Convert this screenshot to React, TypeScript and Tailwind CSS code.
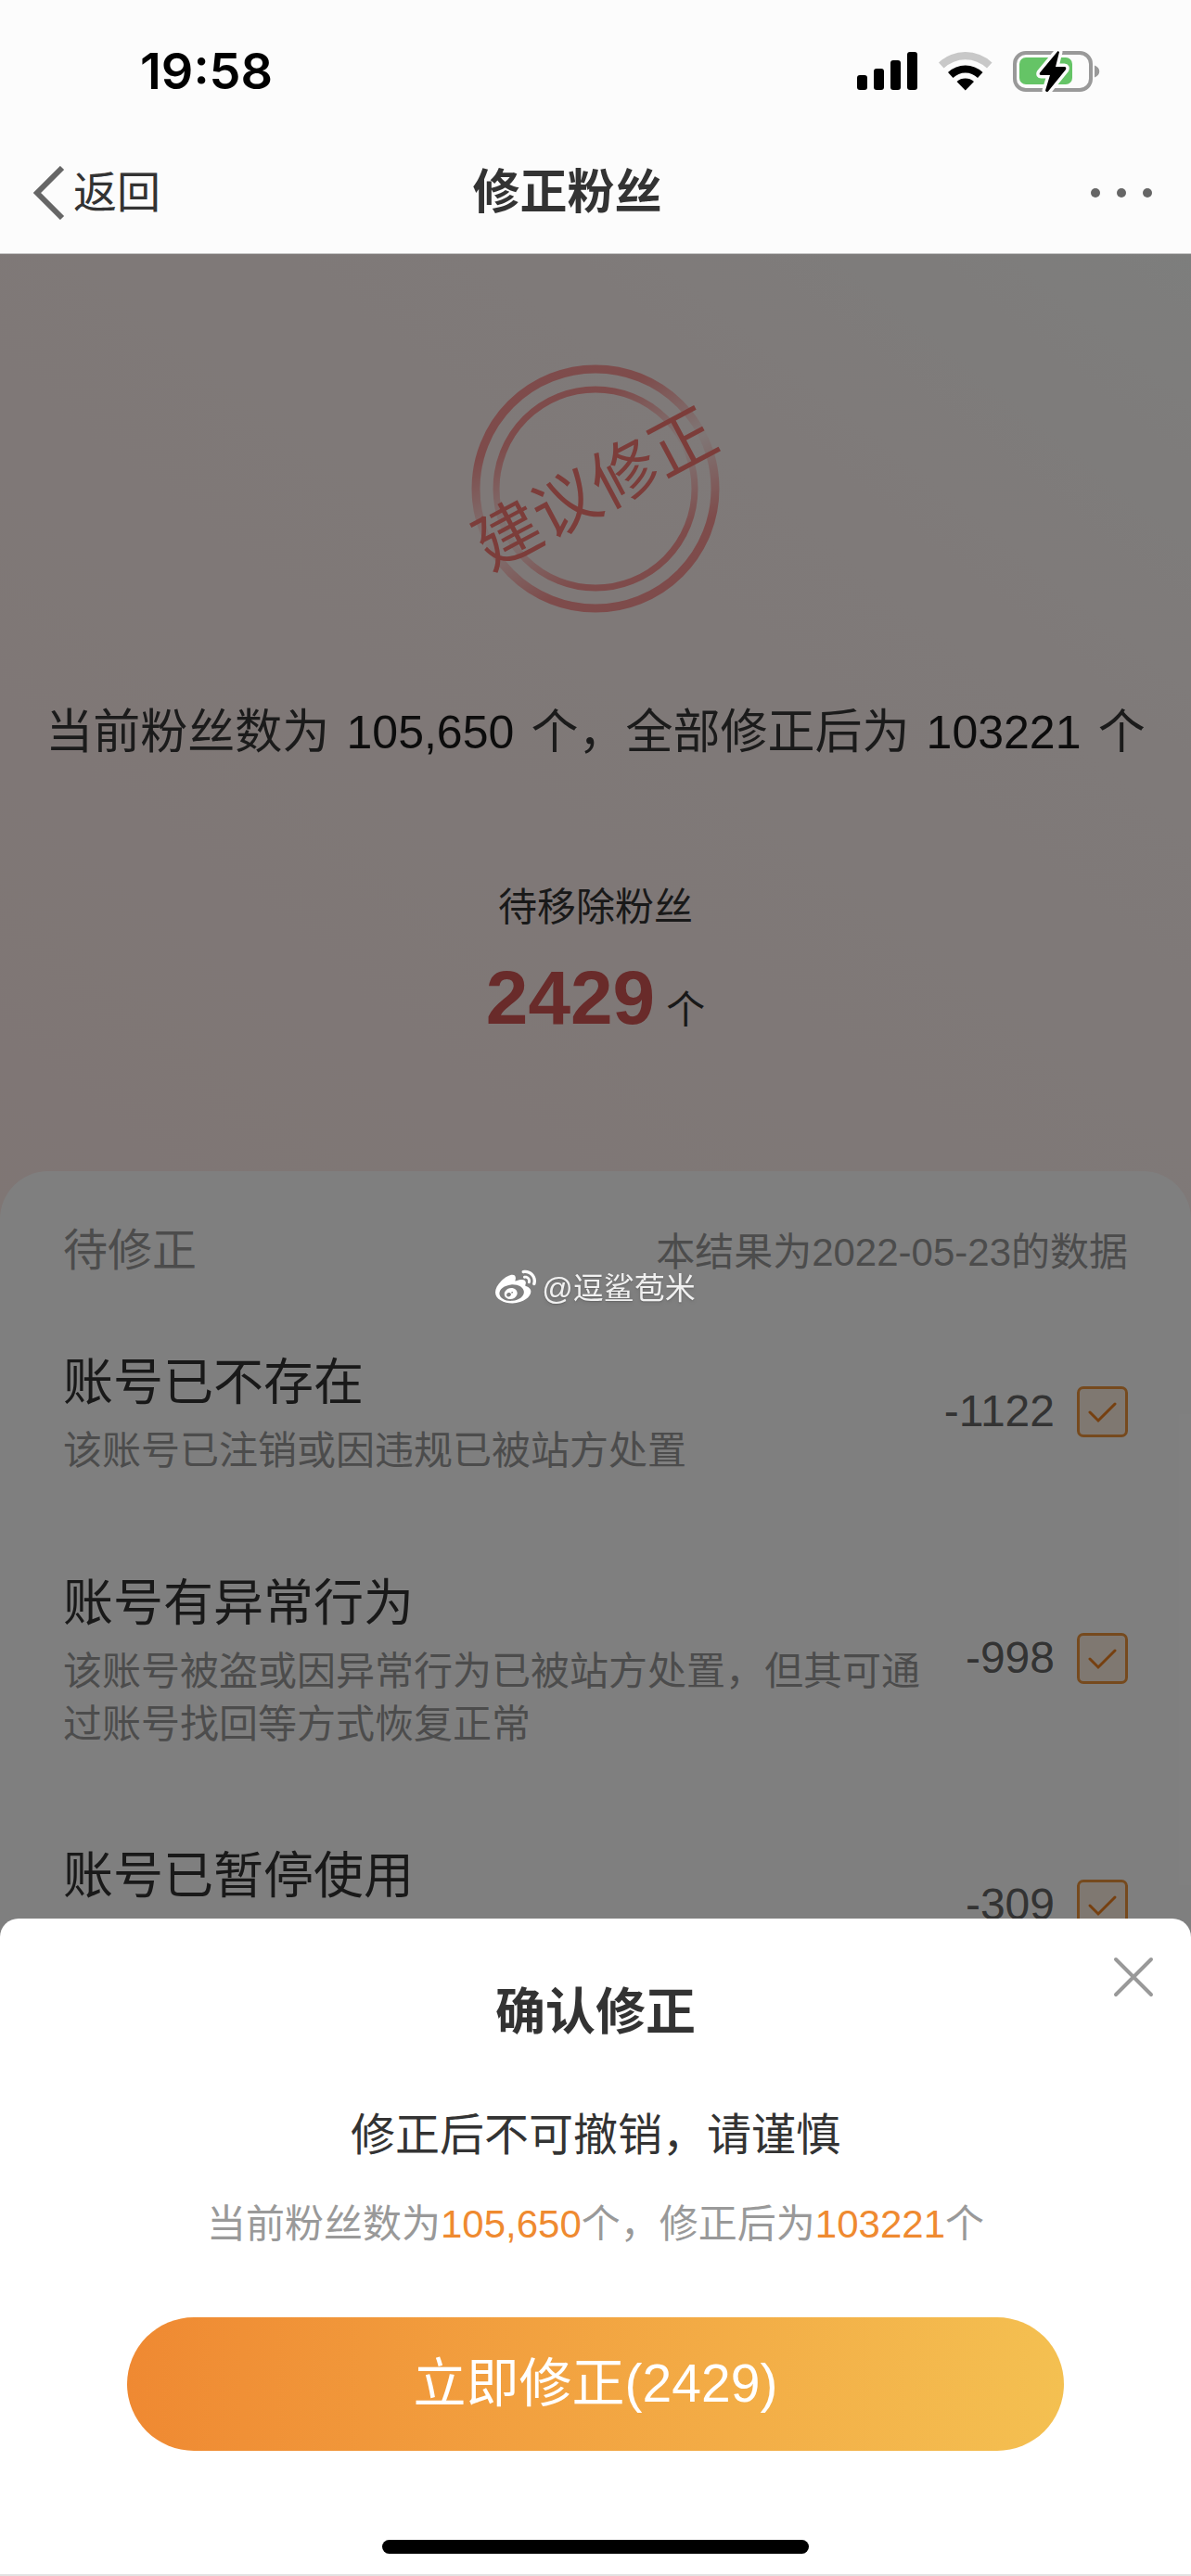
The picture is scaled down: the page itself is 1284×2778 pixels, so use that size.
import React, { useState } from 'react';
import { FaWeibo } from 'react-icons/fa';

const items = [
  { id: 'missing', title: '账号已不存在', desc: '该账号已注销或因违规已被站方处置', value: '-1122' },
  { id: 'abnormal', title: '账号有异常行为', desc: '该账号被盗或因异常行为已被站方处置，但其可通过账号找回等方式恢复正常', value: '-998' },
  { id: 'paused', title: '账号已暂停使用', desc: '', value: '-309' },
];

function StatusIcons() {
  return (
    <div className="flex items-center">
      <svg width="66" height="44" viewBox="0 0 66 44" aria-hidden="true">
        <rect x="0" y="26" width="11" height="16" rx="3" />
        <rect x="18" y="19" width="11" height="23" rx="3" />
        <rect x="36" y="10" width="11" height="32" rx="3" />
        <rect x="54" y="1" width="11" height="41" rx="3" />
      </svg>
      <svg className="ml-[22px]" width="58" height="44" viewBox="0 0 58 44" aria-hidden="true">
        <path d="M0 12.5A42 42 0 0 1 57.500 12.500L52 18.500A34 34 0 0 0 5.500 18.500Z" fill="#c8c8c8" />
        <path d="M10 23A27.500 27.500 0 0 1 47.500 23L42 29A19 19 0 0 0 15.500 29Z" />
        <path d="M19.500 33A14 14 0 0 1 38 33L28.750 42.500Z" />
      </svg>
      <svg className="ml-[22px]" width="96" height="48" viewBox="0 0 96 48" aria-hidden="true">
        <rect x="2" y="4" width="82" height="40" rx="12" fill="none" stroke="#999" strokeWidth="4" />
        <rect x="7" y="9" width="57" height="29" rx="7" fill="#65c466" />
        <path d="M88 17.500C95 20 95 28 88 30.500Z" fill="#999" />
        <path
          d="M48.500 2L29 25.500Q28 28 30.500 28H40L35 44.500Q36 47 38 45.500L57 22Q58 19 55.500 19H46L50 3Z"
          stroke="#fcfcfc"
          strokeWidth="7"
          strokeLinejoin="round"
          paintOrder="stroke"
        />
      </svg>
    </div>
  );
}

function Stamp() {
  return (
    <div className="relative flex size-[268px] items-center justify-center">
      <svg className="absolute inset-0" viewBox="0 0 268 268" fill="none" aria-hidden="true">
        <defs>
          {/* both rings fade out along the line of the text */}
          <linearGradient id="upper" gradientUnits="userSpaceOnUse" x1="96" y1="58" x2="134" y2="134">
            <stop offset="0" stopColor="#fff" stopOpacity="0.52" />
            <stop offset="1" stopColor="#fff" stopOpacity="0.03" />
          </linearGradient>
          <linearGradient id="lower" gradientUnits="userSpaceOnUse" x1="172" y1="210" x2="134" y2="134">
            <stop offset="0" stopColor="#fff" stopOpacity="0.52" />
            <stop offset="1" stopColor="#fff" stopOpacity="0.03" />
          </linearGradient>
          <mask id="fade" maskUnits="userSpaceOnUse" x="0" y="0" width="268" height="268">
            <path d="M-40 221L308 47V-40H-40Z" fill="url(#upper)" />
            <path d="M-40 221L308 47V308H-40Z" fill="url(#lower)" />
          </mask>
        </defs>
        <g stroke="#fb4444" mask="url(#fade)">
          <circle cx="134" cy="134" r="129" strokeWidth="9" />
          <circle cx="134" cy="134" r="107" strokeWidth="7" />
        </g>
      </svg>
      <span className="relative -rotate-28 text-[71px] leading-none whitespace-nowrap text-[#f87a74]">建议修正</span>
    </div>
  );
}

export default function App() {
  const [checked, setChecked] = useState<Record<string, boolean>>({ missing: true, abnormal: true, paused: true });

  const toggle = (id: string) => setChecked((prev) => ({ ...prev, [id]: !prev[id] }));

  return (
    <div className="flex h-screen flex-col overflow-hidden bg-white font-['Liberation_Sans','Noto_Sans_CJK_SC',sans-serif] text-[#333]">
      <header className="shrink-0 border-b border-[#c4c4c4] bg-[#fcfcfc]">
        <div className="flex h-[153px] items-center justify-between pr-[96px] pl-[151px]">
          <span className="font-['Inter',sans-serif] text-[54px] font-semibold text-black">19:58</span>
          <StatusIcons />
        </div>
        <nav className="flex h-[120px] items-center pr-[42px] pb-[10px] pl-9">
          <button type="button" className="flex items-center gap-[9px] text-[47px] leading-[60px]">
            <svg width="34" height="58" viewBox="0 0 34 58" fill="none" stroke="#666" strokeWidth="6" aria-hidden="true">
              <path d="M31 2L4 29L31 56" />
            </svg>
            返回
          </button>
          <h1 className="flex-1 text-center text-[51px] leading-[60px] font-bold">修正粉丝</h1>
          <button type="button" aria-label="更多" className="flex w-[192px] justify-end gap-[18px]">
            <span className="size-[10px] rounded-full bg-[#666]" />
            <span className="size-[10px] rounded-full bg-[#666]" />
            <span className="size-[10px] rounded-full bg-[#666]" />
          </button>
        </nav>
      </header>

      <main className="relative min-h-0 flex-1 overflow-hidden bg-white">
        <section className="flex flex-col items-center bg-linear-to-bl from-[#fbfcfa] via-[#fff4f2] via-30% to-[#ffece9] pt-[119px] pb-[198px]">
          <Stamp />
          <p className="mt-[93px] text-[51px] leading-[72px] whitespace-nowrap text-[#363636]">
            当前粉丝数为 <span className="mx-1 text-[50px] text-[#181818]">105,650</span> 个，全部修正后为{' '}
            <span className="mx-1 text-[50px] text-[#181818]">103221</span> 个
          </p>
          <p className="mt-[123px] text-[42px] leading-[60px]">待移除粉丝</p>
          <p className="mt-[26px] flex items-baseline gap-3 text-[42px] leading-none">
            <strong className="text-[82px] text-[#d25654]">2429</strong>
            <span>个</span>
          </p>
        </section>

        <section className="-mt-[52px] rounded-t-[52px] bg-white px-[68px] pt-14">
          <div className="flex items-center justify-between text-[#999]">
            <h2 className="text-[48px] leading-[60px]">待修正</h2>
            <span className="pt-1 text-[42px] leading-none">本结果为2022-05-23的数据</span>
          </div>
          <ul className="mt-[71px] flex flex-col gap-[94px]">
            {items.map((item) => (
              <li key={item.id} className="flex min-h-[144px] items-center">
                <label htmlFor={item.id} className="flex-1 self-start">
                  <span className="mb-1 block text-[54px] leading-[82px]">{item.title}</span>
                  <span className="block text-[42px] leading-[57px] text-[#999]">{item.desc}</span>
                </label>
                <div className="flex w-[220px] items-center justify-end gap-6 text-[48px] text-[#666]">
                  {item.value}
                  <span className="relative flex size-[55px]">
                    <input
                      id={item.id}
                      type="checkbox"
                      checked={checked[item.id]}
                      onChange={() => toggle(item.id)}
                      className="size-[55px] appearance-none rounded-[7px] border-3 border-[#ec943c] bg-[#fff0e2]"
                    />
                    {checked[item.id] && (
                      <svg className="pointer-events-none absolute inset-0" viewBox="0 0 55 55" fill="none" stroke="#ec8020" strokeWidth="3" strokeLinecap="round" aria-hidden="true">
                        <path d="M14 28L23 37L41 19" />
                      </svg>
                    )}
                  </span>
                </div>
              </li>
            ))}
          </ul>
        </section>
        <div className="absolute inset-0 bg-black/50" />
      </main>

      <div role="dialog" aria-labelledby="sheet-title" className="fixed inset-x-0 bottom-0 flex flex-col items-center rounded-t-[20px] border-b-2 border-[#e2e2e2] bg-white pt-[68px] pb-[22px]">
        <button type="button" aria-label="关闭" className="absolute top-[41px] right-10">
          <svg width="44" height="44" viewBox="0 0 44 44" fill="none" stroke="#999" strokeWidth="4" strokeLinecap="round" aria-hidden="true">
            <path d="M3 3L41 41M41 3L3 41" />
          </svg>
        </button>
        <h2 id="sheet-title" className="text-[54px] leading-[66px] font-bold">确认修正</h2>
        <p className="mt-[70px] text-[48px] leading-[60px]">修正后不可撤销，请谨慎</p>
        <p className="mt-9 text-[42px] leading-[60px] text-[#999]">
          当前粉丝数为<span className="text-[#ef8a30]">105,650</span>个，修正后为<span className="text-[#ef8a30]">103221</span>个
        </p>
        <div className="mt-[70px] w-full px-[137px]">
          <button type="button" className="h-[144px] w-full rounded-full bg-linear-to-r from-[#ef8932] to-[#f4c051] text-[57px] text-white">
            立即修正(2429)
          </button>
        </div>
        <div className="mt-24 h-[15px] w-[460px] rounded-full bg-black" />
      </div>

      <div className="pointer-events-none fixed inset-0 flex items-center justify-center gap-[6px] text-[33px] leading-none text-white/90 text-shadow-md">
        <FaWeibo className="size-[44px] text-white" />
        <span>@逗鲨苞米</span>
      </div>
    </div>
  );
}
